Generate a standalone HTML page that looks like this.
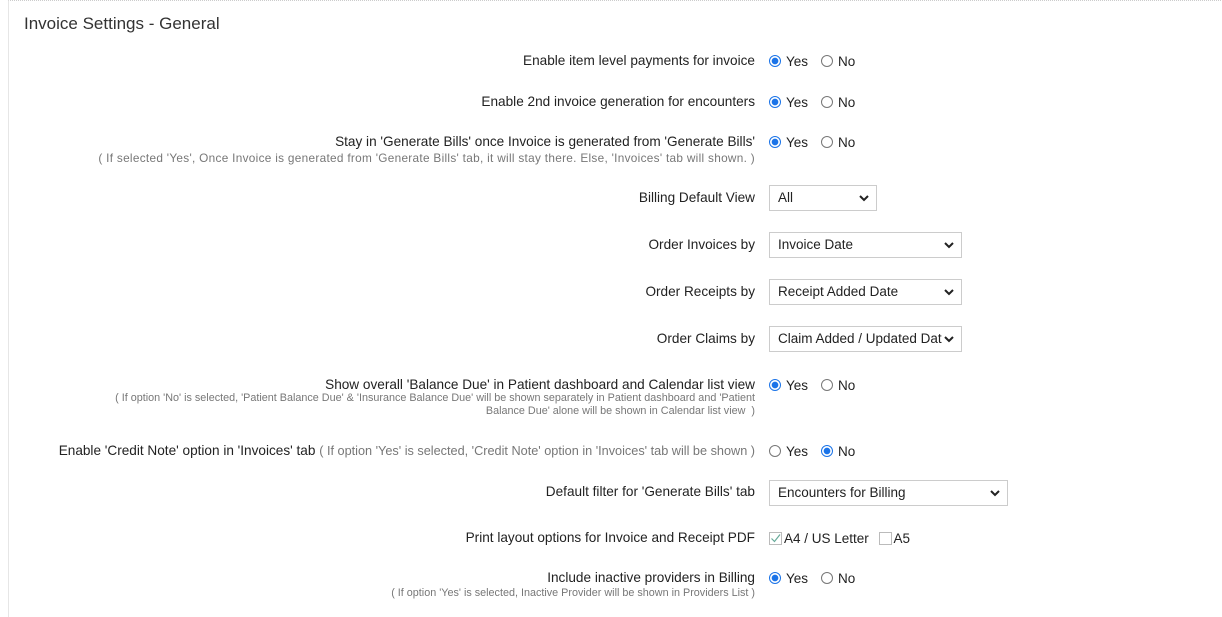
<!DOCTYPE html>
<html><head><style>
body{margin:0;width:1222px;height:616px;background:#fff;font-family:"Liberation Sans",sans-serif;color:#222;position:relative;overflow:hidden}
.frame{position:absolute;left:8px;top:0;width:1222px;height:616px;border-top:1px dotted #ccc;border-left:1px solid #e6e6e6}
h1{position:absolute;left:24px;top:14px;margin:0;font-weight:normal;font-size:17px;color:#333}
.l{position:absolute;right:467px;white-space:nowrap;font-size:13.6px;text-align:right;line-height:16px}
.n{position:absolute;right:467px;white-space:nowrap;font-size:10px;color:#777;text-align:right;line-height:13px}
.c{position:absolute;left:769px;font-size:13.5px;white-space:nowrap;line-height:16px}
.r{display:inline-block;width:12px;height:12px;border:1px solid #777;border-radius:50%;vertical-align:-1px;margin-right:5px;box-sizing:border-box;position:relative}
.r.on{border-color:#1a73e8;background:radial-gradient(circle,#1a73e8 0 3px,#fff 3.6px)}
.no{margin-left:13px}
.s{position:absolute;left:769px;height:26px;border:1px solid #ccc;box-sizing:border-box;font-size:13.5px;line-height:24px;padding-left:8px;color:#222;white-space:nowrap}
.s svg{position:absolute;right:7px;top:8px;background:#fff}
.cb{display:inline-block;width:13px;height:13px;border:1px solid #bbb;vertical-align:-2px;margin-right:2px;box-sizing:border-box;position:relative}
</style></head><body>
<div class="frame"></div>
<h1>Invoice Settings - General</h1>

<div class="l" style="top:53px">Enable item level payments for invoice</div>
<div class="c" style="top:54px"><span class="r on"></span>Yes<span class="r no"></span>No</div>

<div class="l" style="top:94px">Enable 2nd invoice generation for encounters</div>
<div class="c" style="top:95px"><span class="r on"></span>Yes<span class="r no"></span>No</div>

<div class="l" style="top:134px">Stay in 'Generate Bills' once Invoice is generated from 'Generate Bills'</div>
<div class="n" style="top:152px;font-size:11.8px;letter-spacing:0.3px">( If selected 'Yes', Once Invoice is generated from 'Generate Bills' tab, it will stay there. Else, 'Invoices' tab will shown. )</div>
<div class="c" style="top:135px"><span class="r on"></span>Yes<span class="r no"></span>No</div>

<div class="l" style="top:190px">Billing Default View</div>
<div class="s" style="top:185px;width:108px">All<svg width="10" height="8"><path d="M1 2l4 4 4-4" stroke="#222" stroke-width="2" fill="none"/></svg></div>

<div class="l" style="top:237px">Order Invoices by</div>
<div class="s" style="top:232px;width:193px">Invoice Date<svg width="10" height="8"><path d="M1 2l4 4 4-4" stroke="#222" stroke-width="2" fill="none"/></svg></div>

<div class="l" style="top:284px">Order Receipts by</div>
<div class="s" style="top:279px;width:193px">Receipt Added Date<svg width="10" height="8"><path d="M1 2l4 4 4-4" stroke="#222" stroke-width="2" fill="none"/></svg></div>

<div class="l" style="top:331px">Order Claims by</div>
<div class="s" style="top:326px;width:193px;overflow:hidden">Claim Added / Updated Dat<svg width="10" height="8"><path d="M1 2l4 4 4-4" stroke="#222" stroke-width="2" fill="none"/></svg></div>

<div class="l" style="top:377px">Show overall 'Balance Due' in Patient dashboard and Calendar list view</div>
<div class="n" style="top:392px;font-size:10.8px">( If option 'No' is selected, 'Patient Balance Due' &amp; 'Insurance Balance Due' will be shown separately in Patient dashboard and 'Patient</div>
<div class="n" style="top:405px;font-size:10.8px">Balance Due' alone will be shown in Calendar list view &nbsp;)</div>
<div class="c" style="top:378px"><span class="r on"></span>Yes<span class="r no"></span>No</div>

<div class="l" style="top:443px">Enable 'Credit Note' option in 'Invoices' tab <span style="font-size:12.7px;color:#777">( If option 'Yes' is selected, 'Credit Note' option in 'Invoices' tab will be shown )</span></div>
<div class="c" style="top:444px"><span class="r"></span>Yes<span class="r on no"></span>No</div>

<div class="l" style="top:484px">Default filter for 'Generate Bills' tab</div>
<div class="s" style="top:480px;width:239px">Encounters for Billing<svg width="10" height="8"><path d="M1 2l4 4 4-4" stroke="#222" stroke-width="2" fill="none"/></svg></div>

<div class="l" style="top:530px">Print layout options for Invoice and Receipt PDF</div>
<div class="c" style="top:531px"><span class="cb"><svg width="13" height="13" style="position:absolute;left:-1px;top:-1px"><path d="M2.5 6.5l3 3 5.5-7" stroke="#6a9" stroke-width="1.2" fill="none"/></svg></span>A4 / US Letter <span class="cb" style="margin-left:6px"></span>A5</div>

<div class="l" style="top:570px">Include inactive providers in Billing</div>
<div class="n" style="top:587px;font-size:10.8px">( If option 'Yes' is selected, Inactive Provider will be shown in Providers List )</div>
<div class="c" style="top:571px"><span class="r on"></span>Yes<span class="r no"></span>No</div>
</body></html>
